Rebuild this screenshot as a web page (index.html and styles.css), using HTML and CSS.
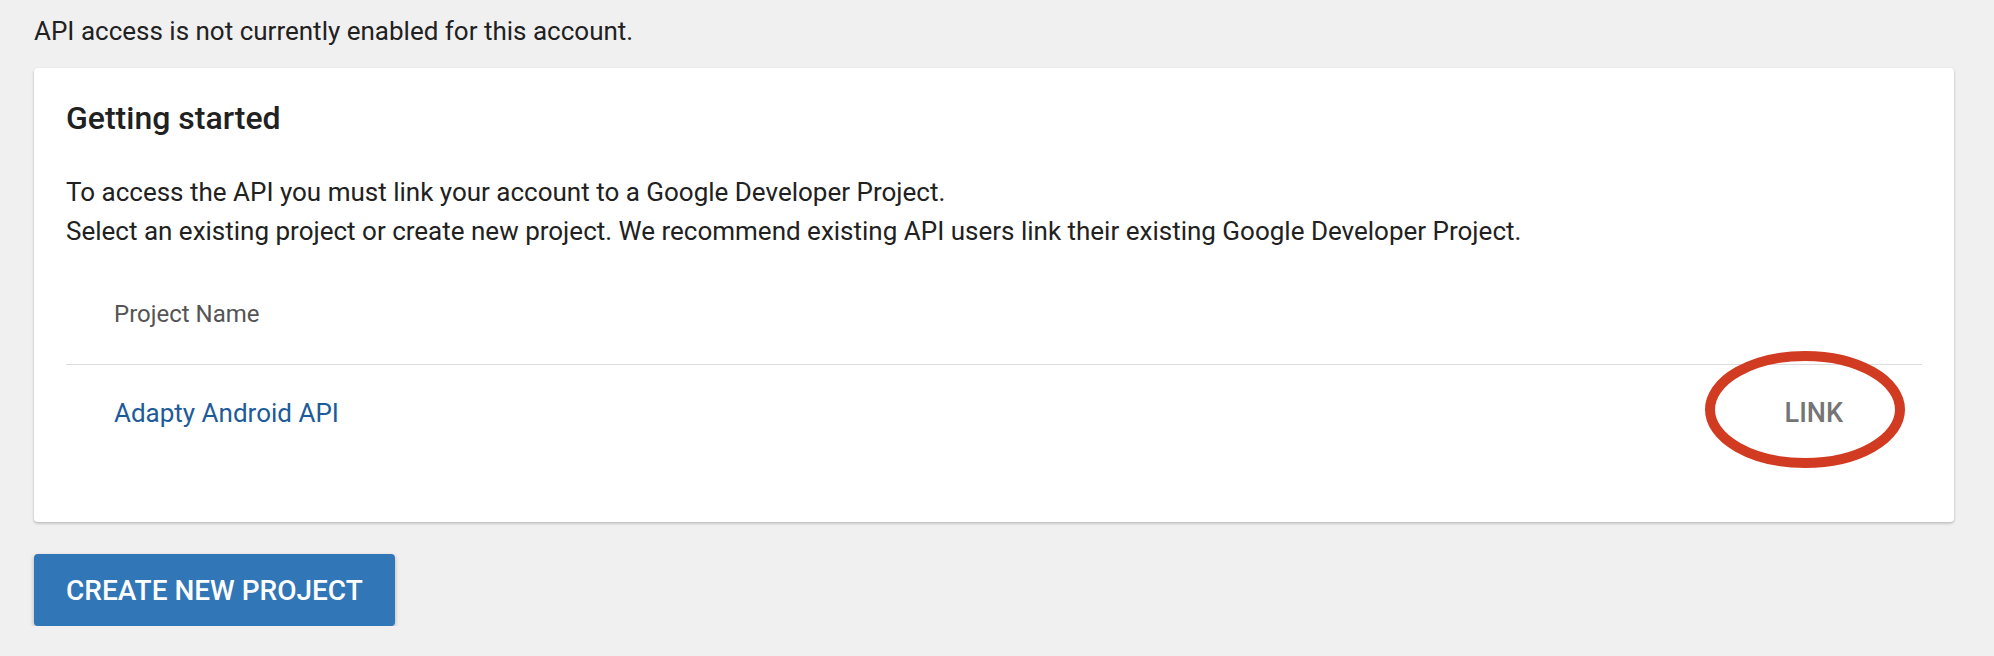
FILE: index.html
```html
<!DOCTYPE html>
<html lang="en">
<head>
<meta charset="utf-8">
<title>API access</title>
<link rel="stylesheet" href="styles.css">
</head>
<body>
<main class="page">
  <p class="notice">API access is not currently enabled for this account.</p>
  <section class="card">
    <h2 class="card-title">Getting started</h2>
    <div class="intro">
      <p>To access the API you must link your account to a Google Developer Project.</p>
      <p>Select an existing project or create new project. We recommend existing API users link their existing Google Developer Project.</p>
    </div>
    <div class="table">
      <div class="table-head">Project Name</div>
      <div class="table-row">
        <a class="project-link" href="#">Adapty Android API</a>
        <div class="link-wrap">
          <button class="link-btn" type="button">LINK</button>
          <svg class="annotation" width="200" height="117" viewBox="0 0 200 117" aria-hidden="true">
            <ellipse cx="100" cy="58.5" rx="95" ry="53.5" fill="none" stroke="#d13b21" stroke-width="10"/>
          </svg>
        </div>
      </div>
    </div>
  </section>
  <button class="create-btn" type="button">CREATE NEW PROJECT</button>
</main>
</body>
</html>
```

FILE: styles.css
```css
* { box-sizing: border-box; }

html, body {
  margin: 0;
  padding: 0;
  background: #f0f0f0;
}

body {
  font-family: Roboto, "Noto Sans", "Liberation Sans", sans-serif;
  color: #212121;
}

.page {
  padding: 13px 40px 0 34px;
  display: flex;
  flex-direction: column;
  align-items: flex-start;
}

.notice {
  margin: 0 0 19px 0;
  font-size: 26px;
  line-height: 36px;
  color: #212121;
}

.card {
  align-self: stretch;
  background: #ffffff;
  border-radius: 4px;
  box-shadow: 0 1px 3px rgba(0, 0, 0, 0.18), 0 2px 3px rgba(0, 0, 0, 0.08);
  padding: 30px 32px 62px 32px;
}

.card-title {
  margin: 0;
  font-size: 32px;
  line-height: 40px;
  font-weight: 500;
  color: #212121;
}

.intro {
  margin-top: 35px;
}

.intro p {
  margin: 0;
  font-size: 26px;
  line-height: 39px;
  color: #212121;
}

.table {
  display: flex;
  flex-direction: column;
}

.table-head {
  padding: 49px 0 36px 48px;
  font-size: 24px;
  line-height: 28px;
  color: #555555;
  border-bottom: 1px solid #dcdcdc;
}

.table-row {
  display: flex;
  align-items: center;
  justify-content: space-between;
  height: 95px;
  padding: 0 64px 0 48px;
}

.project-link {
  font-size: 26px;
  line-height: 28px;
  color: #1d5b99;
  text-decoration: none;
}

.link-wrap {
  position: relative;
  display: flex;
}

.link-btn {
  font-family: Roboto, "Noto Sans", "Liberation Sans", sans-serif;
  font-size: 27px;
  line-height: 28px;
  font-weight: 500;
  color: #757575;
  background: transparent;
  border: 0;
  padding: 0 15px 0 16px;
  margin: 0;
  cursor: pointer;
}

.annotation {
  position: absolute;
  left: calc(50% - 108.5px);
  top: calc(50% - 62px);
  pointer-events: none;
}

.create-btn {
  margin-top: 32px;
  height: 72px;
  padding: 0 32px;
  font-family: Roboto, "Noto Sans", "Liberation Sans", sans-serif;
  font-size: 28px;
  font-weight: 500;
  color: #ffffff;
  background: #3176b6;
  border: 0;
  border-radius: 4px;
  box-shadow: 0 2px 4px rgba(0, 0, 0, 0.28);
  cursor: pointer;
}
```
